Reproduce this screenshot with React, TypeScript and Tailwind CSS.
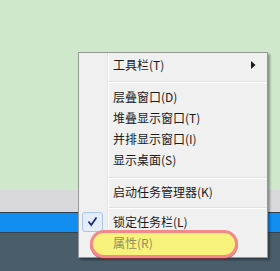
import React from "react";

const font = { fontFamily: '"Noto Sans CJK SC", "Noto Sans", sans-serif' };

function Sep({ h, top }: { h: string; top: string }) {
  return (
    <div className={`${h} ${top} ml-[30px] mr-[1px]`}>
      <div className="h-px bg-[#e0e0e0]" />
      <div className="h-px bg-white" />
    </div>
  );
}

function Item({
  label,
  h = "h-[21px]",
  children,
}: {
  label: string;
  h?: string;
  children?: React.ReactNode;
}) {
  return (
    <div className={`${h} flex items-center`}>
      <div className="w-[34px] shrink-0 h-full flex items-center">{children}</div>
      <span className="text-[12px] leading-none text-[#1b1b1b]">{label}</span>
    </div>
  );
}

export default function App() {
  return (
    <div className="relative w-[280px] h-[271px] overflow-hidden" style={font}>
      <div className="h-[190px] bg-[#cfe7cb]" />
      <div className="h-[22px] bg-[#d9d9dd]" />
      <div className="h-px bg-[#2e3e4c]" />
      <div className="h-[19px] bg-[#118ef0]" />
      <div className="h-px bg-[#33424f]" />
      <div className="h-[38px] bg-[#4a5d6b]" />

      <div className="absolute left-[78px] top-[52px] w-[190px] h-[206px] border border-[#979797] bg-[#f0f0f0] pt-px shadow-[2px_2px_2px_rgba(0,0,0,0.35)]">
        <div className="absolute left-[28px] top-0 bottom-0 flex">
          <div className="w-px bg-[#e2e3e3]" />
          <div className="w-px bg-white" />
        </div>

        <div className="relative">
          <div className="h-[22px] flex items-center">
            <div className="w-[34px] shrink-0" />
            <span className="text-[12px] leading-none text-[#1b1b1b]">工具栏(T)</span>
            <svg className="ml-auto mr-[11px]" width="5" height="8" viewBox="0 0 5 8">
              <path d="M0 0 L4.5 4 L0 8 Z" fill="#1a1a1a" />
            </svg>
          </div>
          <Sep h="h-[10px]" top="pt-[5px]" />
          <Item label="层叠窗口(D)" />
          <Item label="堆叠显示窗口(T)" />
          <Item label="并排显示窗口(I)" />
          <Item label="显示桌面(S)" />
          <Sep h="h-[11px]" top="pt-[7px]" />
          <Item label="启动任务管理器(K)" />
          <Sep h="h-[9px]" top="pt-[5px]" />
          <Item label="锁定任务栏(L)">
            <div className="ml-[3px] w-[21px] h-[20px] rounded-[3px] border border-[#a9c5e8] bg-[#e6edf8] flex items-center justify-center">
              <svg width="11" height="11" viewBox="0 0 11 11">
                <path d="M1.5 5.5 L4.2 9 L9.5 1.5" fill="none" stroke="#1c2a80" strokeWidth="1.8" />
              </svg>
            </div>
          </Item>
          <div className="relative h-[22px] flex items-center">
            <div className="absolute left-[11px] top-[-2px] w-[148px] h-[28px] rounded-full border-[3px] border-[#f28a8a] bg-[#f7f27c] shadow-[0_1px_0_rgba(170,40,40,0.6)]" />
            <div className="w-[34px] shrink-0" />
            <span className="relative text-[12px] leading-none text-[#8f8f5e]">属性(R)</span>
          </div>
        </div>
      </div>
    </div>
  );
}
